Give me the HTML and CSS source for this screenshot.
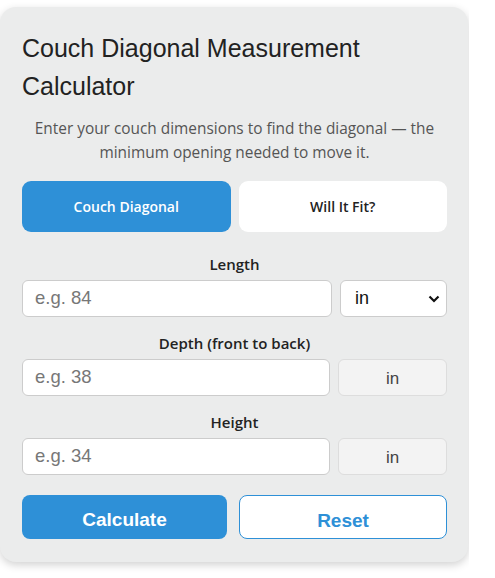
FILE: index.html
```html
<!DOCTYPE html>
<html lang="en">
<head>
    <meta charset="UTF-8">
    <meta name="viewport" content="width=device-width, initial-scale=1.0">
    <title>Couch Diagonal Measurement Calculator</title>
    <link rel="stylesheet" href="styles.css">
</head>
<body>

    <div class="frame">
        <div class="card">
            <h1>Couch Diagonal Measurement Calculator</h1>
            <p class="intro">Enter your couch dimensions to find the diagonal — the minimum opening needed to move it.</p>

            <!-- Tabs -->
            <div class="tabs">
                <button class="tab active">Couch Diagonal</button>
                <button class="tab">Will It Fit?</button>
            </div>

            <!-- Fields -->
            <div class="field">
                <label for="length">Length</label>
                <div class="row row-select">
                    <input id="length" type="text" placeholder="e.g. 84">
                    <select>
                        <option>in</option>
                        <option>cm</option>
                    </select>
                </div>
            </div>

            <div class="field">
                <label for="depth">Depth (front to back)</label>
                <div class="row">
                    <input id="depth" type="text" placeholder="e.g. 38">
                    <div class="unit">in</div>
                </div>
            </div>

            <div class="field">
                <label for="height">Height</label>
                <div class="row">
                    <input id="height" type="text" placeholder="e.g. 34">
                    <div class="unit">in</div>
                </div>
            </div>

            <!-- Actions -->
            <div class="actions">
                <button class="btn btn-primary">Calculate</button>
                <button class="btn btn-outline">Reset</button>
            </div>
        </div>
    </div>

</body>
</html>
```

FILE: styles.css
```css
* {
    margin: 0;
    padding: 0;
    box-sizing: border-box;
}

body {
    background: #fff;
    font-family: 'Liberation Sans', Arial, sans-serif;
    color: #222;
}

.frame {
    width: 469px;
    padding: 7px 0 12px;
    overflow: hidden;
}

.card {
    width: 468px;
    background: #ebecec;
    border-radius: 16px;
    box-shadow: 0 3px 8px rgba(0, 0, 0, 0.18);
    padding: 22px 21px 23px 22px;
}

h1 {
    font-size: 25px;
    font-weight: normal;
    line-height: 38px;
    color: #222;
}

.intro {
    margin-top: 12px;
    font-family: 'Open Sans', sans-serif;
    font-size: 15.4px;
    line-height: 24px;
    color: #555;
    text-align: center;
}

.tabs {
    margin-top: 16px;
    display: grid;
    grid-template-columns: 1fr 1fr;
    gap: 8px;
}

.tab {
    height: 51px;
    border: none;
    border-radius: 9px;
    background: #fff;
    color: #222;
    font-family: 'Open Sans', sans-serif;
    font-size: 14px;
    font-weight: 600;
}

.tab.active {
    background: #2e90d7;
    color: #fff;
}

.field {
    margin-top: 16px;
}

.tabs + .field {
    margin-top: 22px;
}

.field label {
    display: block;
    height: 20px;
    line-height: 20px;
    margin-bottom: 6px;
    text-align: center;
    font-family: 'Open Sans', sans-serif;
    font-size: 15px;
    font-weight: 600;
    color: #222;
}

.row {
    display: grid;
    grid-template-columns: 1fr 109px;
    gap: 8px;
    height: 37px;
}

.row-select {
    grid-template-columns: 1fr 107px;
}

.row input {
    height: 37px;
    border: 1px solid #cccccc;
    border-radius: 6px;
    background: #fff;
    padding: 0 12px 2px;
    font-family: 'Liberation Sans', Arial, sans-serif;
    font-size: 18.5px;
    color: #222;
}

.row input::placeholder {
    color: #777;
}

.row select {
    height: 37px;
    border: 1px solid #cccccc;
    border-radius: 6px;
    background: #fff url("data:image/svg+xml,%3Csvg xmlns='http://www.w3.org/2000/svg' width='12' height='8' viewBox='0 0 12 8'%3E%3Cpath d='M1.5 1.5 6 6l4.5-4.5' fill='none' stroke='%23111' stroke-width='2.2'/%3E%3C/svg%3E") no-repeat right 6px center;
    appearance: none;
    -webkit-appearance: none;
    padding: 0 12px 2px 14px;
    font-family: 'Liberation Sans', Arial, sans-serif;
    font-size: 18px;
    color: #111;
}

.unit {
    display: flex;
    align-items: center;
    justify-content: center;
    padding-top: 2px;
    border: 1px solid #dddddd;
    border-radius: 6px;
    background: #f3f3f3;
    font-size: 17px;
    color: #444;
}

.actions {
    margin-top: 20px;
    display: grid;
    grid-template-columns: 205px 1fr;
    gap: 12px;
}

.btn {
    height: 44px;
    border-radius: 8px;
    font-family: 'Liberation Sans', Arial, sans-serif;
    font-size: 19px;
    font-weight: bold;
}

.btn-primary {
    background: #2e90d7;
    border: none;
    color: #fff;
    padding-top: 5px;
}

.btn-outline {
    background: #fff;
    border: 1px solid #2e90d7;
    color: #2e90d7;
    padding-top: 7px;
}
```
